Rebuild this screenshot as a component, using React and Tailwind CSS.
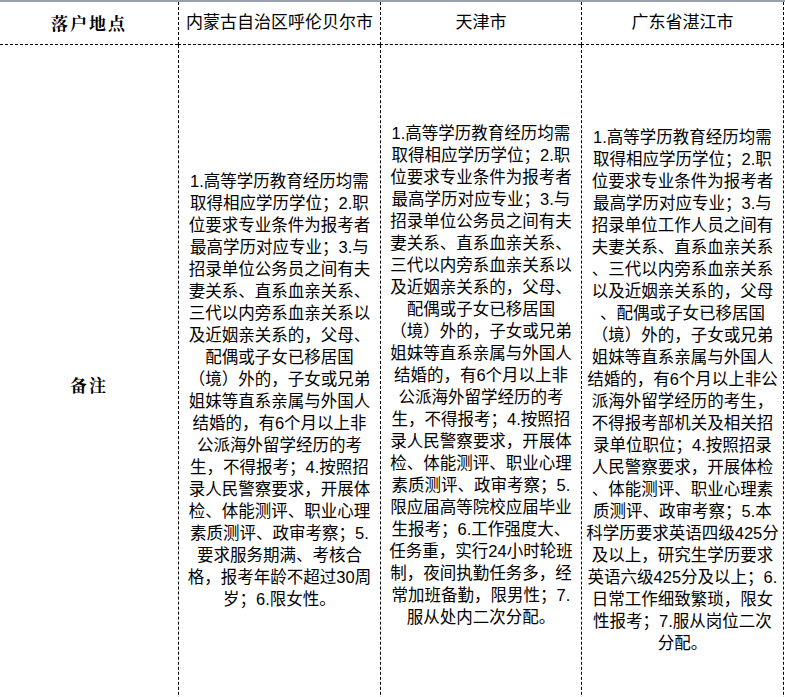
const col2 = `1.高等学历教育经历均需
取得相应学历学位；2.职
位要求专业条件为报考者
最高学历对应专业；3.与
招录单位公务员之间有夫
妻关系、直系血亲关系、
三代以内旁系血亲关系以
及近姻亲关系的，父母、
配偶或子女已移居国
（境）外的，子女或兄弟
姐妹等直系亲属与外国人
结婚的，有6个月以上非
公派海外留学经历的考
生，不得报考；4.按照招
录人民警察要求，开展体
检、体能测评、职业心理
素质测评、政审考察；5.
要求服务期满、考核合
格，报考年龄不超过30周
岁；6.限女性。`;

const col3 = `1.高等学历教育经历均需
取得相应学历学位；2.职
位要求专业条件为报考者
最高学历对应专业；3.与
招录单位公务员之间有夫
妻关系、直系血亲关系、
三代以内旁系血亲关系以
及近姻亲关系的，父母、
配偶或子女已移居国
（境）外的，子女或兄弟
姐妹等直系亲属与外国人
结婚的，有6个月以上非
公派海外留学经历的考
生，不得报考；4.按照招
录人民警察要求，开展体
检、体能测评、职业心理
素质测评、政审考察；5.
限应届高等院校应届毕业
生报考；6.工作强度大、
任务重，实行24小时轮班
制，夜间执勤任务多，经
常加班备勤，限男性；7.
服从处内二次分配。`;

const col4 = `1.高等学历教育经历均需
取得相应学历学位；2.职
位要求专业条件为报考者
最高学历对应专业；3.与
招录单位工作人员之间有
夫妻关系、直系血亲关系
、三代以内旁系血亲关系
以及近姻亲关系的，父母
、配偶或子女已移居国
（境）外的，子女或兄弟
姐妹等直系亲属与外国人
结婚的，有6个月以上非公
派海外留学经历的考生，
不得报考部机关及相关招
录单位职位；4.按照招录
人民警察要求，开展体检
、体能测评、职业心理素
质测评、政审考察；5.本
科学历要求英语四级425分
及以上，研究生学历要求
英语六级425分及以上；6.
日常工作细致繁琐，限女
性报考；7.服从岗位二次
分配。`;

const Lines = ({ text }) => (
  <div className="text-center text-[16.5px] leading-[22px] text-black">
    {text.split('\n').map((l, i) => <div key={i} className="whitespace-nowrap">{l}</div>)}
  </div>
);

export default function App() {
  const font = { fontFamily: '"Liberation Sans", "Noto Sans CJK SC", sans-serif' };
  return (
    <div className="w-[785px] h-[697px] overflow-hidden bg-white" style={font}>
      <div className="grid grid-cols-[178px_202px_201px_203px] border-t-2 border-gray-400">
        <div className="h-[43px] flex items-center justify-center border-b border-dashed border-black text-[17px] font-bold tracking-[2px]" style={{ fontFamily: '"Noto Serif CJK SC", "Noto Sans CJK SC", serif' }}>落户地点</div>
        <div className="h-[43px] flex items-center justify-center border-b border-l border-dashed border-black text-[17px]">内蒙古自治区呼伦贝尔市</div>
        <div className="h-[43px] flex items-center justify-center border-b border-l border-dashed border-black text-[17px]">天津市</div>
        <div className="h-[43px] flex items-center justify-center border-b border-l border-r border-dashed border-black text-[17px]">广东省湛江市</div>

        <div className="h-[700px] flex items-center justify-center pb-[20px] text-[17px] font-bold tracking-[2px]" style={{ fontFamily: '"Noto Serif CJK SC", "Noto Sans CJK SC", serif' }}>备注</div>
        <div className="h-[700px] flex items-center justify-center pb-[10px] border-l border-dashed border-black"><Lines text={col2} /></div>
        <div className="h-[700px] flex items-center justify-center pb-[40px] border-l border-dashed border-black"><Lines text={col3} /></div>
        <div className="h-[700px] flex items-center justify-center pb-[10px] border-l border-r border-dashed border-black"><Lines text={col4} /></div>
      </div>
    </div>
  );
}
